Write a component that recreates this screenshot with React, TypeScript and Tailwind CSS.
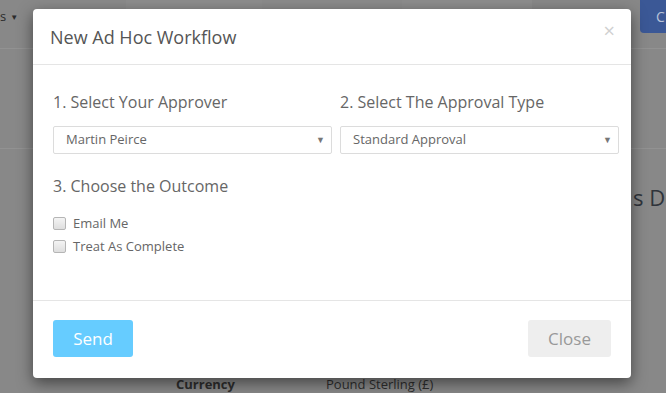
import React from "react";

interface Choice {
  id: number;
  label: string;
}

const outcomes: Choice[] = [
  { id: 1, label: "Email Me" },
  { id: 2, label: "Treat As Complete" },
];

function FakeSelect({ value }: { value: string }) {
  return (
    <div className="h-[28px] border border-[#dcdcdc] rounded-[2px] bg-white flex items-center justify-between pl-[12px] pr-[6px]">
      <span className="text-[13px] text-[#666]">{value}</span>
      <span className="text-[9px] text-[#777]">▼</span>
    </div>
  );
}

export default function App() {
  return (
    <div className="relative w-[666px] h-[393px] overflow-hidden bg-[#888888] font-['Open_Sans',sans-serif]">
      {/* page behind the dimmed overlay */}
      <div className="h-[34px] flex">
        <div className="w-[40px] flex items-center text-[13px] text-[#2b2b2b]">
          <span>s</span>
          <span className="ml-[4px] text-[8px]">▼</span>
        </div>
        <div className="w-[86px] bg-[#8a8a8a]" />
        <div className="w-[136px] bg-[#8d8d8d]" />
        <div className="w-[140px] bg-[#8b8b8b]" />
        <div className="w-[130px] bg-[#8d8d8d]" />
        <div className="flex-1" />
        <div className="w-[26px] h-[33px] rounded-bl-[4px] bg-[#3b5896] flex items-center pl-[16px] text-[14px] text-[#b8c3d8] overflow-hidden">
          C
        </div>
      </div>
      <div className="mt-[14px] h-px bg-[#929292]" />
      <div className="mt-[99px] h-px bg-[#929292]" />
      <div className="mt-[37px] pl-[633px] text-[22px] text-[#2f343b] leading-none whitespace-nowrap">s De</div>
      <div className="mt-[170px] flex text-[13px] leading-none text-[#2e2e2e] whitespace-nowrap">
        <span className="ml-[176px] font-bold w-[150px]">Currency</span>
        <span>Pound Sterling (£)</span>
      </div>

      {/* modal */}
      <div className="absolute left-[33px] top-[9px] w-[598px] bg-white rounded-[4px] shadow-[0_5px_15px_rgba(0,0,0,0.5)]">
        <div className="h-[56px] border-b border-[#e5e5e5] flex items-center justify-between pl-[17px] pr-[16px]">
          <h4 className="text-[18px] text-[#555] leading-none">New Ad Hoc Workflow</h4>
          <span className="text-[20px] text-[#d0d0d0] leading-none mt-[-12px]">×</span>
        </div>

        <div className="h-[235px] pl-[20px] pr-[12px] pt-[26px]">
          <div className="grid grid-cols-2 gap-[8px]">
            <div>
              <p className="text-[16px] leading-[22px] text-[#666] mb-[13px]">1. Select Your Approver</p>
              <FakeSelect value="Martin Peirce" />
            </div>
            <div>
              <p className="text-[16px] leading-[22px] text-[#666] mb-[13px]">2. Select The Approval Type</p>
              <FakeSelect value="Standard Approval" />
            </div>
          </div>
          <p className="mt-[21px] text-[16px] leading-[22px] text-[#666] mb-[15px]">3. Choose the Outcome</p>
          <ul>
            {outcomes.map((o) => (
              <li key={o.id} className="h-[23px] flex items-center">
                <span className="w-[13px] h-[13px] rounded-[2px] border border-[#b5b5b5] bg-gradient-to-b from-[#f4f4f4] to-[#dedede]" />
                <span className="ml-[7px] text-[13px] text-[#666]">{o.label}</span>
              </li>
            ))}
          </ul>
        </div>

        <div className="border-t border-[#e5e5e5] px-[20px] pt-[19px] pb-[21px] flex justify-between">
          <button className="w-[80px] h-[37px] rounded-[3px] bg-[#66ccff] text-white text-[17px]">Send</button>
          <button className="w-[83px] h-[37px] rounded-[3px] bg-[#eeeeee] text-[#999] text-[17px]">Close</button>
        </div>
      </div>
    </div>
  );
}
